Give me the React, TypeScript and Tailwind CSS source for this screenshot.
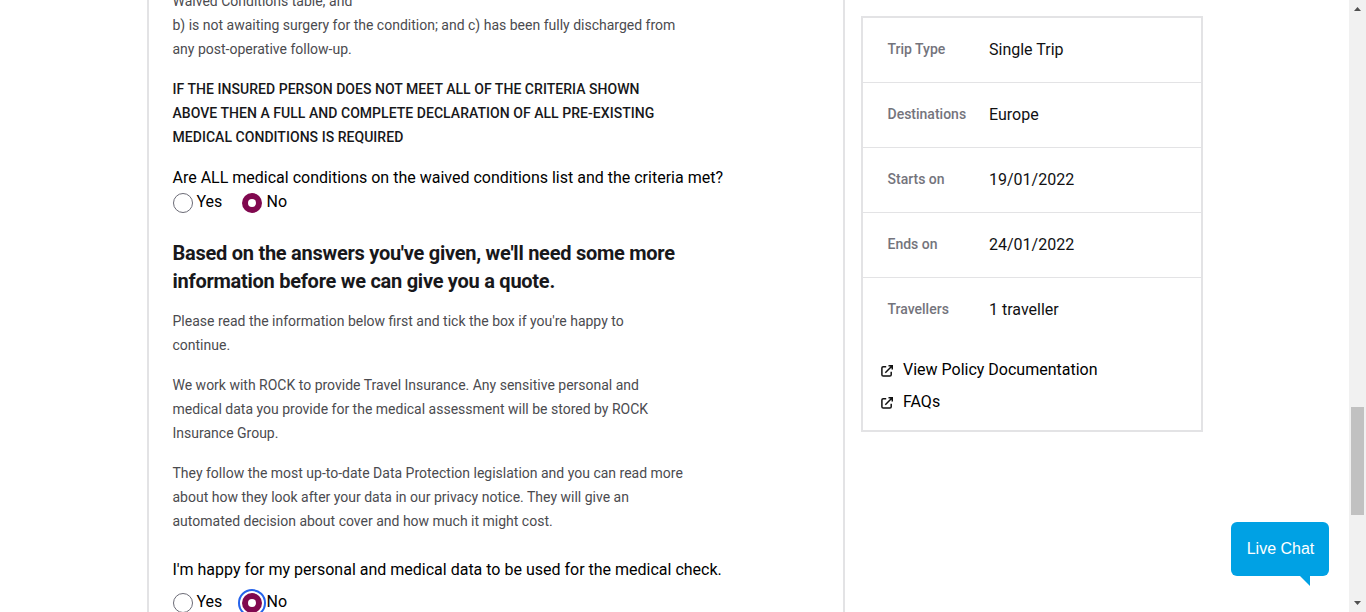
import type { ReactNode } from "react";

const trip = [
  { label: "Trip Type", value: "Single Trip" },
  { label: "Destinations", value: "Europe" },
  { label: "Starts on", value: "19/01/2022" },
  { label: "Ends on", value: "24/01/2022" },
  { label: "Travellers", value: "1 traveller" },
];

function Lines({ lines, className = "" }: { lines: string[]; className?: string }) {
  return (
    <p className={`whitespace-nowrap ${className}`}>
      {lines.map((line) => (
        <span key={line} className="block">
          {line}
        </span>
      ))}
    </p>
  );
}

function Radio({ checked = false, focused = false }: { checked?: boolean; focused?: boolean }) {
  return (
    <svg viewBox="0 0 28 28" className="-m-1 size-7 shrink-0" aria-hidden="true">
      {focused && <circle cx="14" cy="14" r="13" fill="#fff" stroke="#2563eb" strokeWidth="2" />}
      {checked ? (
        <>
          <circle cx="14" cy="14" r="10" fill="#80084f" />
          <circle cx="14" cy="14" r="4" fill="#fff" />
        </>
      ) : (
        <circle cx="14" cy="14" r="9.5" fill="#fff" stroke="#6b6b76" strokeWidth="1" />
      )}
    </svg>
  );
}

function YesNo({ focused = false }: { focused?: boolean }) {
  return (
    <div className="flex h-6 text-base leading-6 text-black">
      <span className="flex w-[69px] gap-1">
        <span className="mt-[3px] flex h-5">
          <Radio />
        </span>
        Yes
      </span>
      <span className="flex gap-[5px]">
        <span className="mt-[3px] flex h-5">
          <Radio checked focused={focused} />
        </span>
        No
      </span>
    </div>
  );
}

function DocLink({ children }: { children: ReactNode }) {
  return (
    <a className="flex h-8 items-center text-base leading-6 text-black">
      <svg
        viewBox="0 0 12 12"
        className="mt-px mr-[10px] size-3"
        fill="none"
        stroke="#111"
        strokeWidth="1.5"
        aria-hidden="true"
      >
        <path d="M5.2 1.8H2.2Q.9 1.8.9 3.1V9.8Q.9 11.1 2.2 11.1H8.9Q10.2 11.1 10.2 9.8V6.8" />
        <path d="M7.5.75H11.25V4.5M11 1L4.3 7.7" />
      </svg>
      {children}
    </a>
  );
}

export default function App() {
  return (
    <div className="flex h-[612px] w-[1366px] overflow-hidden bg-white font-['Roboto',sans-serif]">
      <main className="ml-[147px] w-[698px] shrink-0 border-x-2 border-[#e3e3e5]">
        <div className="-mt-[11px] pl-[23.5px]">
          <Lines
            className="mb-4 text-sm leading-6 text-[#4b4b4f]"
            lines={[
              "Waived Conditions table; and",
              "b) is not awaiting surgery for the condition; and c) has been fully discharged from",
              "any post-operative follow-up.",
            ]}
          />
          <Lines
            className="mb-[17px] text-sm leading-6 font-medium tracking-[0.04px] text-[#18181b]"
            lines={[
              "IF THE INSURED PERSON DOES NOT MEET ALL OF THE CRITERIA SHOWN",
              "ABOVE THEN A FULL AND COMPLETE DECLARATION OF ALL PRE-EXISTING",
              "MEDICAL CONDITIONS IS REQUIRED",
            ]}
          />
          <Lines
            className="text-base leading-6 text-black"
            lines={["Are ALL medical conditions on the waived conditions list and the criteria met?"]}
          />
          <YesNo />
          <h2 className="mt-[25px] mb-[14px] text-xl leading-7 font-bold tracking-[-0.262px] text-[#18181b]">
            <Lines
              lines={[
                "Based on the answers you've given, we'll need some more",
                "information before we can give you a quote.",
              ]}
            />
          </h2>
          <Lines
            className="mb-4 text-sm leading-6 text-[#4b4b4f]"
            lines={["Please read the information below first and tick the box if you're happy to", "continue."]}
          />
          <Lines
            className="mb-4 text-sm leading-6 text-[#4b4b4f]"
            lines={[
              "We work with ROCK to provide Travel Insurance. Any sensitive personal and",
              "medical data you provide for the medical assessment will be stored by ROCK",
              "Insurance Group.",
            ]}
          />
          <Lines
            className="mb-[25px] text-sm leading-6 text-[#4b4b4f]"
            lines={[
              "They follow the most up-to-date Data Protection legislation and you can read more",
              "about how they look after your data in our privacy notice. They will give an",
              "automated decision about cover and how much it might cost.",
            ]}
          />
          <Lines
            className="mb-2 text-base leading-6 text-black"
            lines={["I'm happy for my personal and medical data to be used for the medical check."]}
          />
          <YesNo focused />
        </div>
      </main>

      <aside className="mt-4 ml-4 h-[416px] w-[342px] shrink-0 border-2 border-[#e3e3e5]">
        <dl className="divide-y divide-[#e3e3e5]">
          {trip.map((row) => (
            <div key={row.label} className="flex h-[65px] items-center pl-[24.5px] last:h-16">
              <dt className="w-[101.5px] pb-0.5 text-sm font-medium text-[#74747c]">{row.label}</dt>
              <dd className="text-base text-[#111113]">{row.value}</dd>
            </div>
          ))}
        </dl>
        <nav className="mt-3 pl-[18px]">
          <DocLink>View Policy Documentation</DocLink>
          <DocLink>FAQs</DocLink>
        </nav>
      </aside>

      <div className="mt-[522px] ml-7 w-[98px] shrink-0">
        <button className="block h-[54px] w-full rounded-md bg-[#00a1e4] pl-px font-['Liberation_Sans',sans-serif] text-base text-white">
          Live Chat
        </button>
        <svg viewBox="0 0 10 10" className="ml-[69px] size-[10px]" aria-hidden="true">
          <path d="M0 0H10V10Z" fill="#00a1e4" />
        </svg>
      </div>

      <div className="ml-auto flex w-[17px] shrink-0 flex-col items-center bg-[#f1f1f1]">
        <svg viewBox="0 0 7 4" className="mt-[7px] h-1 w-[7px]" aria-hidden="true">
          <path d="M0 4L3.5 0L7 4Z" fill="#505050" />
        </svg>
        <div className="mt-[396px] h-[108px] w-[13px] bg-[#c1c1c1]" />
        <svg viewBox="0 0 7 4" className="mt-auto mb-[7px] h-1 w-[7px]" aria-hidden="true">
          <path d="M0 0L3.5 4L7 0Z" fill="#505050" />
        </svg>
      </div>
    </div>
  );
}
